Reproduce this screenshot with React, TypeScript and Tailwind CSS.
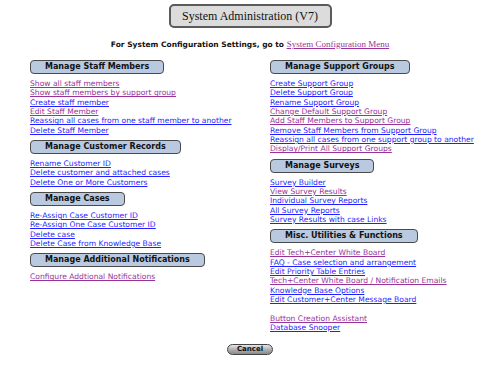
type Item = { label: string; visited?: boolean; gapBefore?: boolean };
type Section = { title: string; items: Item[] };

const left: Section[] = [
  {
    title: "Manage Staff Members",
    items: [
      { label: "Show all staff members", visited: true },
      { label: "Show staff members by support group", visited: true },
      { label: "Create staff member" },
      { label: "Edit Staff Member", visited: true },
      { label: "Reassign all cases from one staff member to another" },
      { label: "Delete Staff Member" },
    ],
  },
  {
    title: "Manage Customer Records",
    items: [
      { label: "Rename Customer ID" },
      { label: "Delete customer and attached cases" },
      { label: "Delete One or More Customers" },
    ],
  },
  {
    title: "Manage Cases",
    items: [
      { label: "Re-Assign Case Customer ID" },
      { label: "Re-Assign One Case Customer ID" },
      { label: "Delete case" },
      { label: "Delete Case from Knowledge Base" },
    ],
  },
  {
    title: "Manage Additional Notifications",
    items: [{ label: "Configure Addtional Notifications", visited: true }],
  },
];

const right: Section[] = [
  {
    title: "Manage Support Groups",
    items: [
      { label: "Create Support Group" },
      { label: "Delete Support Group" },
      { label: "Rename Support Group" },
      { label: "Change Default Support Group", visited: true },
      { label: "Add Staff Members to Support Group", visited: true },
      { label: "Remove Staff Members from Support Group" },
      { label: "Reassign all cases from one support group to another" },
      { label: "Display/Print All Support Groups", visited: true },
    ],
  },
  {
    title: "Manage Surveys",
    items: [
      { label: "Survey Builder" },
      { label: "View Survey Results", visited: true },
      { label: "Individual Survey Reports" },
      { label: "All Survey Reports" },
      { label: "Survey Results with case Links" },
    ],
  },
  {
    title: "Misc. Utilities & Functions",
    items: [
      { label: "Edit Tech+Center White Board", visited: true },
      { label: "FAQ - Case selection and arrangement" },
      { label: "Edit Priority Table Entries" },
      { label: "Tech+Center White Board / Notification Emails", visited: true },
      { label: "Knowledge Base Options" },
      { label: "Edit Customer+Center Message Board" },
      { label: "Button Creation Assistant", visited: true, gapBefore: true },
      { label: "Database Snooper" },
    ],
  },
];

function Column({ sections }: { sections: Section[] }) {
  return (
    <div className="flex flex-col gap-[5px]">
      {sections.map((s) => (
        <div key={s.title} className="flex flex-col items-start">
          <div className="h-[14px] flex items-center px-[14px] mb-[5px] rounded-[4px] border border-[#4a4a4a] bg-[#b9c9df] text-[8px] font-bold text-[#111] leading-none whitespace-nowrap">
            {s.title}
          </div>
          {s.items.map((it) => (
            <a
              key={it.label}
              href="#"
              className={`text-[7.6px] leading-[9.33px] underline whitespace-nowrap ${
                it.gapBefore ? "mt-[9.33px]" : ""
              } ${it.visited ? "text-[#993399]" : "text-[#1f1fff]"}`}
            >
              {it.label}
            </a>
          ))}
        </div>
      ))}
    </div>
  );
}

export default function App() {
  return (
    <div className="w-[500px] h-[375px] bg-white font-['DejaVu_Sans','Verdana',sans-serif] pt-[4px]">
      <div className="flex justify-center">
        <div className="w-[163px] h-[24px] flex items-center justify-center rounded-[5px] border-2 border-[#5a5a5a] bg-[#dcdcdc] font-['Liberation_Serif',serif] text-[12px] text-[#111]">
          System Administration (V7)
        </div>
      </div>
      <div className="mt-[11px] text-center text-[7.5px] font-bold text-[#111] leading-[10px]">
        For System Configuration Settings, go to{" "}
        <a href="#" className="font-['Liberation_Serif',serif] font-normal text-[9px] underline text-[#993399]">
          System Configuration Menu
        </a>
      </div>
      <div className="grid grid-cols-[240px_200px] pl-[30px] mt-[10px]">
        <Column sections={left} />
        <Column sections={right} />
      </div>
      <div className="flex justify-center mt-[12px]">
        <button className="w-[46px] h-[11px] rounded-full border border-[#444] bg-gradient-to-b from-[#e8e8e8] via-[#b0b0b0] to-[#8a8a8a] text-[7px] font-bold text-[#111] leading-none">
          Cancel
        </button>
      </div>
    </div>
  );
}
